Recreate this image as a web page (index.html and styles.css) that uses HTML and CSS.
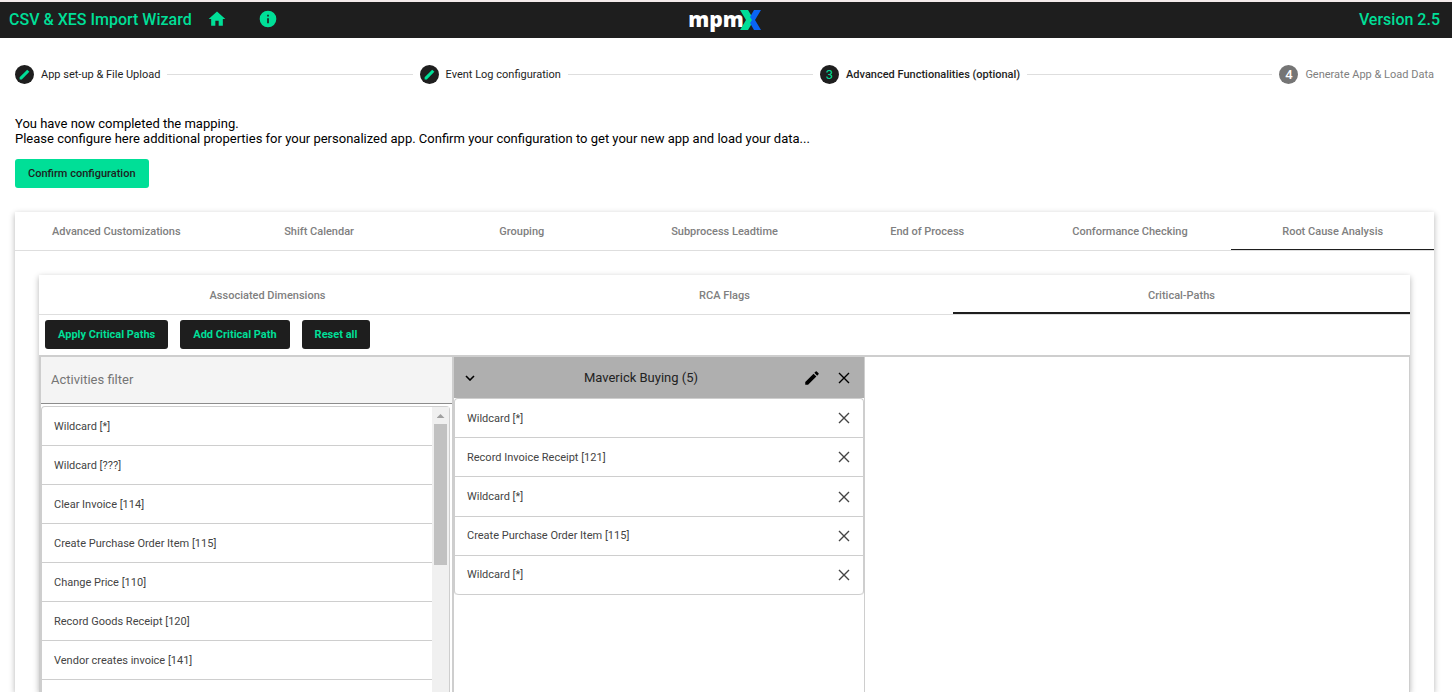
FILE: index.html
```html
<!DOCTYPE html>
<html lang="en">
<head>
<meta charset="utf-8">
<title>CSV &amp; XES Import Wizard</title>
<link rel="stylesheet" href="styles.css">
</head>
<body>
<svg class="defs" aria-hidden="true">
  <symbol id="pen" viewBox="0 0 24 24"><path d="M3 17.250V21h3.750L17.810 9.940l-3.750-3.750L3 17.250zM20.710 7.040a1 1 0 0 0 0-1.410l-2.340-2.340a1 1 0 0 0-1.410 0l-1.830 1.830 3.750 3.750 1.830-1.830z"/></symbol>
  <symbol id="pen-solid" viewBox="0 0 24 24"><path d="M3 17v4h4L21 7l-4-4z"/></symbol>
  <symbol id="cross" viewBox="0 0 12 12"><path d="M1 1l10 10M11 1L1 11" fill="none" stroke="currentColor" stroke-width="1.400"/></symbol>
</svg>
<header class="topbar">
  <div class="topbar-left">
    <h1 class="title">CSV &amp; XES Import Wizard</h1>
    <button class="icon-button" aria-label="Home"><svg class="icon-home" viewBox="0 0 24 24"><path d="M10 20v-6h4v6h5v-8h3L12 3 2 12h3v8z"/></svg></button>
    <button class="icon-button info" aria-label="Information"><svg class="icon-home" viewBox="0 0 24 24"><path d="M12 2a10 10 0 1 0 0 20 10 10 0 0 0 0-20zm1 15h-2v-6h2v6zm0-8h-2V7h2v2z"/></svg></button>
  </div>
  <div class="logo"><span class="logo-text">mpm</span><svg class="logo-x" viewBox="0 0 21 20"><path d="M0 0h8l6 10-6 10H0l6-10z" fill="#00df97"/><path d="M14 0h7l-6 10 6 10h-7l-4-7 2-3-2-3z" fill="#0a64f5"/></svg></div>
  <div class="version">Version 2.5</div>
</header>
<main class="page">
  <ol class="stepper">
    <li class="step"><span class="badge"><svg class="badge-pen"><use href="#pen-solid"/></svg></span>App set-up &amp; File Upload</li>
    <li class="line" aria-hidden="true"></li>
    <li class="step"><span class="badge"><svg class="badge-pen"><use href="#pen-solid"/></svg></span>Event Log configuration</li>
    <li class="line" aria-hidden="true"></li>
    <li class="step current"><span class="badge">3</span>Advanced Functionalities (optional)</li>
    <li class="line" aria-hidden="true"></li>
    <li class="step pending"><span class="badge">4</span>Generate App &amp; Load Data</li>
  </ol>
  <p class="intro">You have now completed the mapping.<br>Please configure here additional properties for your personalized app. Confirm your configuration to get your new app and load your data...</p>
  <button class="button confirm">Confirm configuration</button>
  <section class="card outer">
    <nav class="tabs">
      <button class="tab">Advanced Customizations</button>
      <button class="tab">Shift Calendar</button>
      <button class="tab">Grouping</button>
      <button class="tab">Subprocess Leadtime</button>
      <button class="tab">End of Process</button>
      <button class="tab">Conformance Checking</button>
      <button class="tab active">Root Cause Analysis</button>
    </nav>
    <section class="card inner">
      <nav class="tabs inner-tabs">
        <button class="tab">Associated Dimensions</button>
        <button class="tab">RCA Flags</button>
        <button class="tab active">Critical-Paths</button>
      </nav>
      <div class="actions">
        <button class="button dark">Apply Critical Paths</button>
        <button class="button dark">Add Critical Path</button>
        <button class="button dark">Reset all</button>
      </div>
      <div class="board">
        <div class="column">
          <input class="filter" type="text" placeholder="Activities filter" aria-label="Activities filter">
          <div class="activities">
            <ul class="list">
              <li class="item">Wildcard [*]</li>
              <li class="item">Wildcard [???]</li>
              <li class="item">Clear Invoice [114]</li>
              <li class="item">Create Purchase Order Item [115]</li>
              <li class="item">Change Price [110]</li>
              <li class="item">Record Goods Receipt [120]</li>
              <li class="item">Vendor creates invoice [141]</li>
            </ul>
            <div class="scrollbar"><span class="arrow"></span><span class="thumb"></span></div>
          </div>
        </div>
        <div class="column path">
          <div class="path-head">
            <button class="icon-button" aria-label="Collapse"><svg class="chevron" viewBox="0 0 10 6"><path d="M1 1l4 4 4-4" fill="none" stroke="currentColor" stroke-width="1.600"/></svg></button>
            <span class="path-name">Maverick Buying (5)</span>
            <button class="icon-button" aria-label="Rename"><svg class="head-pen"><use href="#pen"/></svg></button>
            <button class="icon-button" aria-label="Delete path"><svg class="cross"><use href="#cross"/></svg></button>
          </div>
          <ul class="list path-list">
            <li class="item">Wildcard [*]<button class="icon-button" aria-label="Remove"><svg class="cross"><use href="#cross"/></svg></button></li>
            <li class="item">Record Invoice Receipt [121]<button class="icon-button" aria-label="Remove"><svg class="cross"><use href="#cross"/></svg></button></li>
            <li class="item">Wildcard [*]<button class="icon-button" aria-label="Remove"><svg class="cross"><use href="#cross"/></svg></button></li>
            <li class="item">Create Purchase Order Item [115]<button class="icon-button" aria-label="Remove"><svg class="cross"><use href="#cross"/></svg></button></li>
            <li class="item">Wildcard [*]<button class="icon-button" aria-label="Remove"><svg class="cross"><use href="#cross"/></svg></button></li>
          </ul>
        </div>
      </div>
    </section>
  </section>
</main>
</body>
</html>
```
FILE: styles.css
```css
* { box-sizing: border-box; }
body {
  margin: 0;
  height: 100vh;
  overflow: hidden;
  display: flex;
  flex-direction: column;
  background: #fff;
  color: #1e1e1e;
  font-family: Roboto, "Liberation Sans", sans-serif;
  font-size: 11px;
}
.defs { display: none; }
ul, ol { list-style: none; margin: 0; padding: 0; }
button { font: inherit; cursor: pointer; }
svg { display: block; fill: currentColor; }
.icon-button { border: 0; background: none; padding: 0; color: inherit; }

.topbar {
  flex: none;
  display: grid;
  grid-template-columns: 1fr auto 1fr;
  align-items: center;
  height: 38px;
  padding: 0 12px 2px 9px;
  border-top: 2px solid #f3eaea;
  background: #1e1e1e;
  color: #00df97;
  font-size: 16px;
  font-weight: 500;
}
.topbar-left { display: flex; align-items: center; }
.title { margin: 0 15px 0 0; font-size: 16px; font-weight: 500; }
.icon-home { width: 20px; height: 20px; }
.info { margin-left: 31px; }
.logo { display: flex; align-items: center; padding-top: 2px; }
.logo-text {
  padding-bottom: 2px;
  color: #fff;
  font-family: "Noto Sans", Inter, sans-serif;
  font-size: 21px;
  font-weight: 900;
  line-height: 20px;
}
.logo-x { width: 21px; height: 20px; margin-left: -4px; }
.version { text-align: right; }

.page { flex: 1; min-height: 0; display: flex; flex-direction: column; align-items: flex-start; padding: 27px 18px 0 15px; }
.stepper { flex: none; display: flex; align-items: center; align-self: stretch; gap: 7px; height: 19px; }
.step { display: flex; align-items: center; gap: 7px; white-space: nowrap; }
.current { font-weight: 500; }
.pending { color: #808080; }
.line { flex: 1; height: 1px; background: #dedede; }
.badge {
  display: flex;
  align-items: center;
  justify-content: center;
  width: 19px;
  height: 19px;
  border-radius: 50%;
  background: #1e1e1e;
  color: #00df97;
  font-size: 13px;
  font-weight: 400;
}
.badge-pen { width: 13px; height: 13px; }
.pending .badge { background: #757575; color: #fff; font-weight: 500; }
.intro { margin: 32px 0 13px; color: #000; font-size: 13px; line-height: 15px; }
.button { height: 29px; padding: 0 13px; border: 0; border-radius: 3px; font-weight: 500; }
.confirm { flex: none; background: #00df97; color: #1e1e1e; }
.dark { background: #1e1e1e; color: #00df97; font-weight: 700; }

.card { display: flex; flex-direction: column; min-height: 0; box-shadow: 0 2px 6px rgba(0, 0, 0, .3); background: #fff; }
.outer { flex: 1; align-self: stretch; margin-top: 24px; }
.inner { flex: 1; margin: 24px 24px 0; }
.tabs { flex: none; display: flex; height: 39px; border-bottom: 1px solid #dedede; }
.tab { flex: 1; padding: 0; border: 0; background: none; color: #808080; font-weight: 500; }
.active { border-bottom: 1px solid #1e1e1e; padding-top: 1px; }
.inner-tabs { height: 40px; }
.inner-tabs .tab { padding-top: 2px; }
.inner-tabs .active { border-bottom-width: 2px; padding-top: 4px; }
.actions { flex: none; display: flex; gap: 12px; padding: 5px 6px 6px; }

.board { flex: 1; min-height: 0; display: flex; border-top: 2px solid #cecece; border-right: 1px solid #cecece; }
.column { flex: 0 0 calc(30% + 2px); min-height: 0; display: flex; flex-direction: column; border-left: 2px solid #cecece; }
.filter {
  flex: none;
  height: 47px;
  width: 100%;
  padding: 0 10px 2px;
  border: 0;
  border-bottom: 1px solid #8c8c8c;
  background: #f4f4f4;
  font: 13px Roboto, sans-serif;
}
.filter::placeholder { color: #757575; opacity: 1; }
.activities { flex: 1; min-height: 0; display: flex; margin: 2px 2px 0 0; border: 1px solid #cecece; border-bottom: 0; border-radius: 4px 4px 0 0; }
.list { flex: 1; color: #444; }
.item { display: flex; align-items: center; justify-content: space-between; height: 39px; padding: 0 13px 0 12px; border-bottom: 1px solid #cecece; }
.scrollbar { width: 17px; padding: 0 2px; background: #f0f0f0; }
.arrow { display: block; margin: 7px auto 6px; width: 8px; height: 4px; background: #a0a0a0; clip-path: polygon(50% 0, 100% 100%, 0 100%); }
.thumb { display: block; height: 141px; background: #c1c1c1; }
.path { border-right: 1px solid #cecece; }
.path-head { flex: none; display: flex; align-items: center; height: 41px; padding: 0 14px 0 11px; background: #afafaf; font-size: 13px; color: #000; }
.path-name { flex: 1; padding-left: 4px; text-align: center; color: #222; }
.chevron { width: 10px; height: 6px; }
.head-pen { width: 18px; height: 18px; margin-right: 17px; }
.cross { width: 12px; height: 12px; }
.path-list { flex: none; display: flex; flex-direction: column; height: 197px; border: 1px solid #cecece; border-bottom-width: 0; border-radius: 4px; }
.path-list .item { flex: 1; }
.path-list .item:last-child { border-radius: 0 0 4px 4px; }
```
